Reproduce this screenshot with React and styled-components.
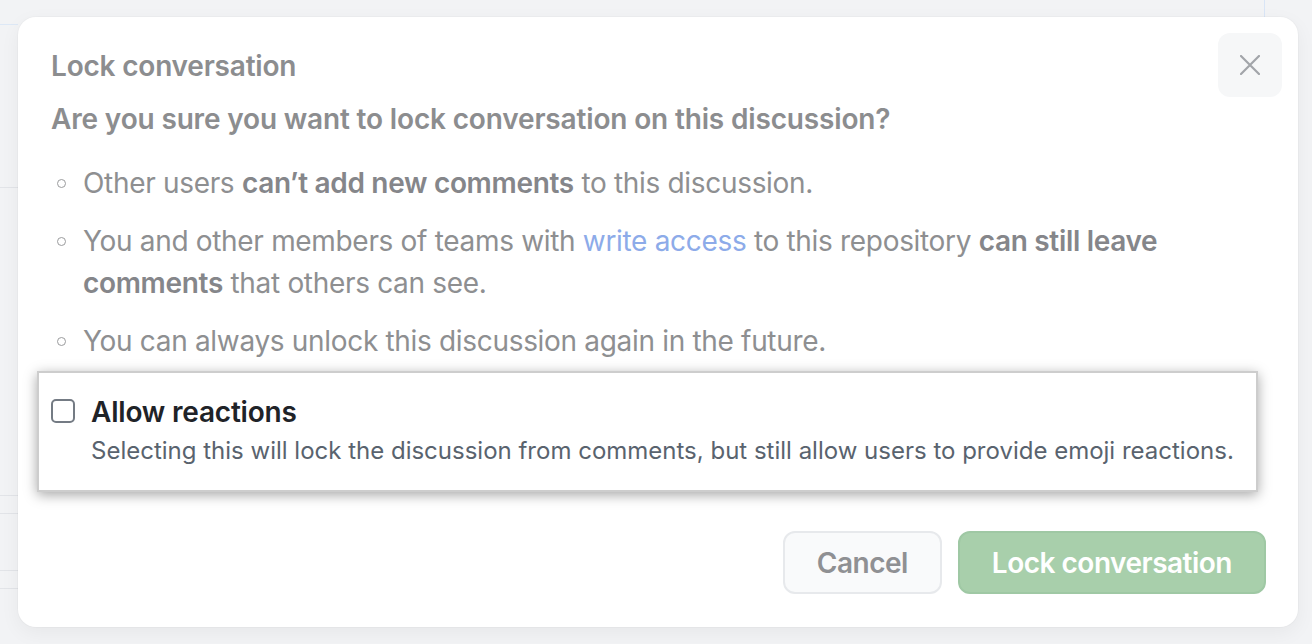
import React from 'react';
import styled, { createGlobalStyle } from 'styled-components';

const GlobalStyle = createGlobalStyle`
  html, body {
    margin: 0;
    padding: 0;
  }
  body {
    font-family: Inter, "Noto Sans", "Liberation Sans", sans-serif;
    -webkit-font-smoothing: antialiased;
  }
`;

const line = (color, x, y, w, h) =>
  `linear-gradient(${color}, ${color}) ${x}px ${y}px / ${w}px ${h}px no-repeat`;

const Page = styled.div`
  box-sizing: border-box;
  min-height: 644px;
  padding: 17px 14px 17px 18px;
  background:
    ${line('#dde8f6', 0, 24, 18, 1)},
    ${line('#e2e4e8', 0, 187, 18, 1)},
    ${line('#e2e4e8', 0, 495, 18, 1)},
    ${line('#e2e4e8', 0, 513, 18, 1)},
    ${line('#e2e4e8', 0, 570, 18, 1)},
    ${line('#e2e4e8', 0, 588, 18, 1)},
    ${line('#d9e5f6', 1264, 0, 1, 17)},
    #f2f3f5;
`;

const Dialog = styled.div`
  background: #fff;
  border-radius: 18px;
  box-shadow: 0 0 0 1px rgba(0, 0, 0, 0.02), 0 6px 20px rgba(0, 0, 0, 0.05);
`;

const Header = styled.div`
  display: flex;
  justify-content: space-between;
  align-items: flex-start;
  padding: 16px 16px 0 33px;
`;

const Title = styled.h1`
  margin: 12px 0 0;
  font-size: 28px;
  line-height: 42px;
  font-weight: 600;
  letter-spacing: -0.2px;
  color: #8c8d8f;
`;

const CloseButton = styled.button`
  width: 64px;
  height: 64px;
  border: 0;
  border-radius: 12px;
  background: #f6f7f8;
  display: flex;
  align-items: center;
  justify-content: center;
  padding: 0;
  color: #a2a5a9;
`;

const Body = styled.div`
  padding: 1px 32px 0 33px;
`;

const Question = styled.p`
  margin: 0;
  font-size: 28px;
  line-height: 42px;
  font-weight: 600;
  letter-spacing: -0.16px;
  color: #8c8d8f;
`;

const List = styled.ul`
  list-style: none;
  margin: 22px 0 0;
  padding: 0;
  display: flex;
  flex-direction: column;
  gap: 16px;
`;

const Item = styled.li`
  display: flex;
  gap: 17px;
  font-size: 28px;
  line-height: 42px;
  letter-spacing: -0.32px;
  color: #8e8f91;
`;

const Bullet = styled.span`
  flex-shrink: 0;
  box-sizing: border-box;
  width: 9px;
  height: 9px;
  margin: 17px 0 0 6px;
  border: 1.5px solid #9a9b9d;
  border-radius: 50%;
`;

const Strong = styled.strong`
  font-weight: 600;
  color: #85868a;
`;

const Link = styled.a`
  color: #8dabe9;
  text-decoration: none;
`;

const Callout = styled.div`
  display: flex;
  gap: 16px;
  margin: 9px 8px 0 -14px;
  padding: 18px 12px 21px;
  background: #fff;
  border: 2px solid #cdcdcd;
  box-shadow: 0 3px 12px rgba(0, 0, 0, 0.35);
`;

const Checkbox = styled.span`
  flex-shrink: 0;
  box-sizing: border-box;
  width: 24px;
  height: 24px;
  margin-top: 8px;
  border: 2px solid #747b84;
  border-radius: 5px;
  background: #fff;
`;

const Label = styled.div`
  font-size: 28px;
  line-height: 42px;
  font-weight: 600;
  letter-spacing: -0.2px;
  color: #1f2328;
`;

const Hint = styled.div`
  font-size: 24px;
  line-height: 36px;
  color: #59636e;
`;

const Footer = styled.div`
  display: flex;
  justify-content: flex-end;
  gap: 16px;
  padding: 39px 32px 33px;
`;

const Button = styled.button`
  height: 63px;
  padding: 0 32px;
  border-radius: 12px;
  font-family: inherit;
  font-size: 28px;
  font-weight: 600;
  letter-spacing: -0.5px;
  border: 2px solid ${(p) => (p.$primary ? '#9fc8a4' : '#e7e9ec')};
  background: ${(p) => (p.$primary ? '#a8cfab' : '#f9fafb')};
  color: ${(p) => (p.$primary ? '#ffffff' : '#8f9093')};
`;

function CloseIcon() {
  return (
    <svg width="20" height="20" viewBox="0 0 20 20" fill="none">
      <path d="M1 1L19 19M19 1L1 19" stroke="currentColor" strokeWidth="2.2" strokeLinecap="round" />
    </svg>
  );
}

export default function App() {
  return (
    <Page>
      <GlobalStyle />
      <Dialog>
        <Header>
          <Title>Lock conversation</Title>
          <CloseButton aria-label="Close">
            <CloseIcon />
          </CloseButton>
        </Header>
        <Body>
          <Question>Are you sure you want to lock conversation on this discussion?</Question>
          <List>
            <Item>
              <Bullet />
              <span>
                Other users <Strong>can’t add new comments</Strong> to this discussion.
              </span>
            </Item>
            <Item>
              <Bullet />
              <span>
                You and other members of teams with <Link href="#">write access</Link> to this
                repository <Strong>can still leave comments</Strong> that others can see.
              </span>
            </Item>
            <Item>
              <Bullet />
              <span>You can always unlock this discussion again in the future.</span>
            </Item>
          </List>
          <Callout>
            <Checkbox />
            <div>
              <Label>Allow reactions</Label>
              <Hint>
                Selecting this will lock the discussion from comments, but still allow users to
                provide emoji reactions.
              </Hint>
            </div>
          </Callout>
        </Body>
        <Footer>
          <Button>Cancel</Button>
          <Button $primary>Lock conversation</Button>
        </Footer>
      </Dialog>
    </Page>
  );
}
